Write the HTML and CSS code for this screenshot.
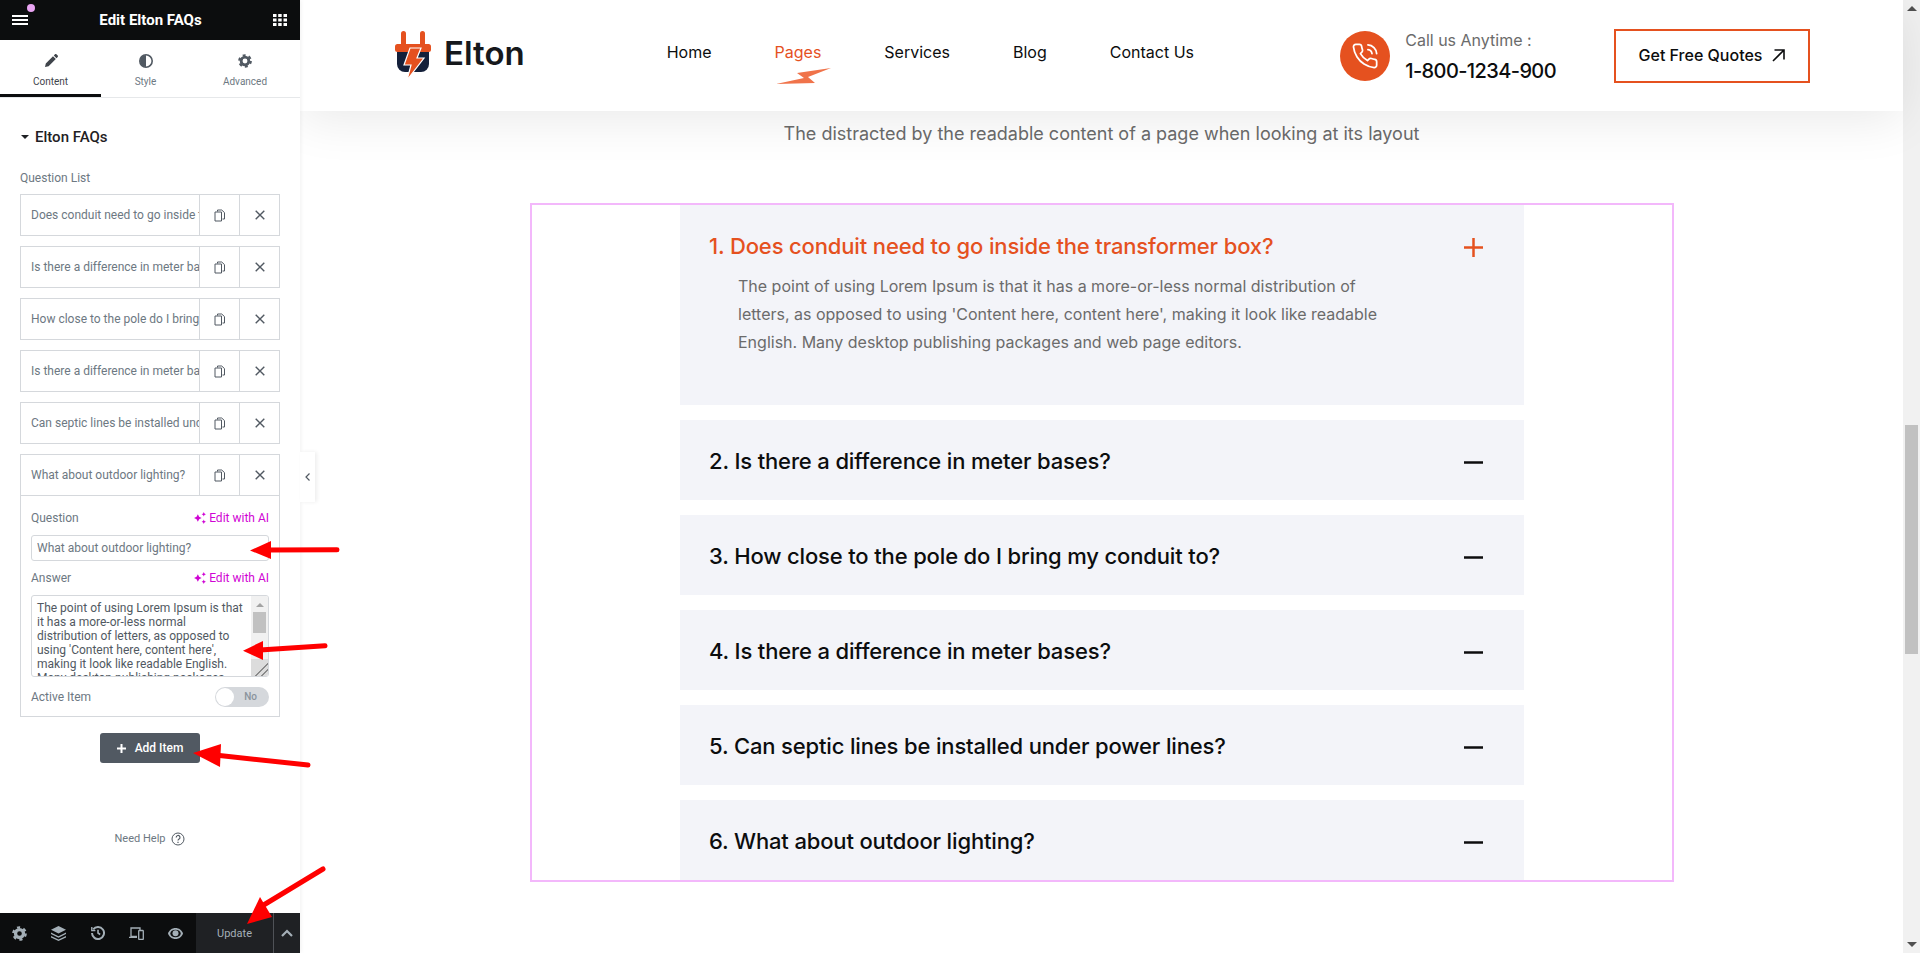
FILE: index.html
```html
<!DOCTYPE html>
<html lang="en">
<head>
  <meta charset="UTF-8">
  <meta name="viewport" content="width=device-width, initial-scale=1.0">
  <title>Edit Elton FAQs</title>
  <link rel="stylesheet" href="styles.css">
</head>
<body>
  <div class="page">

    <!-- Editor panel -->
    <aside class="sidebar">
      <div class="topbar">
        <span class="menu-btn">
          <svg width="16" height="10" viewBox="0 0 16 10"><path d="M0 1h16M0 5h16M0 9h16" stroke="#fff" stroke-width="2"/></svg>
          <i class="menu-dot"></i>
        </span>
        <span class="topbar-title">Edit Elton FAQs</span>
        <svg width="14" height="14" viewBox="0 0 14 14" fill="#fff"><path d="M0 1h3.5v3H0zM5.2 1h3.500v3H5.2zM10.5 1H14v3h-3.500zM0 5.5h3.500v3H0zM5.2 5.5h3.500v3H5.2zM10.5 5.5H14v3h-3.500zM0 10h3.500v3H0zM5.2 10h3.500v3H5.2zM10.5 10H14v3h-3.500z"/></svg>
      </div>

      <div class="tabs">
        <div class="tab active">
          <svg width="14" height="14" viewBox="0 0 14 14" fill="#3f444b"><path d="M1.8 9.400 9 2.200l2.800 2.800-7.200 7.200L1 13zM9.800 1.400 11 .3c.4-.4 1-.4 1.400 0l1.300 1.300c.4.4.4 1 0 1.400l-1.200 1.200z"/></svg>
          <span>Content</span>
        </div>
        <div class="tab">
          <svg width="14" height="14" viewBox="0 0 14 14"><circle cx="7" cy="7" r="6.2" fill="none" stroke="#515962" stroke-width="1.6"/><path d="M7 1a6 6 0 0 0 0 12z" fill="#515962"/></svg>
          <span>Style</span>
        </div>
        <div class="tab">
          <svg width="14" height="14" viewBox="0 0 20 20" fill="none" stroke="#515962"><circle cx="10" cy="10" r="5.5" stroke-width="4"/><circle cx="10" cy="10" r="8.3" stroke-width="3" stroke-dasharray="4.2 4.49"/></svg>
          <span>Advanced</span>
        </div>
      </div>

      <div class="panel">
        <div class="section-title"><i class="caret"></i>Elton FAQs</div>
        <div class="field-label">Question List</div>

        <div class="repeater">
          <div class="row">
            <div class="row-title">Does conduit need to go inside the transformer box?</div>
            <div class="row-btn"><svg class="copy-icon" width="12" height="13" viewBox="0 0 12 13"><path d="M3.5 2.500V1h4.200L10.500 3.600V10H8.500M1 3h6.500v9H1z"/></svg></div>
            <div class="row-btn"><svg class="close-icon" width="10" height="10" viewBox="0 0 10 10"><path d="M.7.7l8.600 8.600M9.300.7.700 9.300"/></svg></div>
          </div>
          <div class="row">
            <div class="row-title">Is there a difference in meter bases?</div>
            <div class="row-btn"><svg class="copy-icon" width="12" height="13" viewBox="0 0 12 13"><path d="M3.5 2.500V1h4.200L10.500 3.600V10H8.500M1 3h6.500v9H1z"/></svg></div>
            <div class="row-btn"><svg class="close-icon" width="10" height="10" viewBox="0 0 10 10"><path d="M.7.7l8.600 8.600M9.300.7.700 9.300"/></svg></div>
          </div>
          <div class="row">
            <div class="row-title">How close to the pole do I bring my conduit to?</div>
            <div class="row-btn"><svg class="copy-icon" width="12" height="13" viewBox="0 0 12 13"><path d="M3.5 2.500V1h4.200L10.500 3.600V10H8.500M1 3h6.500v9H1z"/></svg></div>
            <div class="row-btn"><svg class="close-icon" width="10" height="10" viewBox="0 0 10 10"><path d="M.7.7l8.600 8.600M9.300.7.700 9.300"/></svg></div>
          </div>
          <div class="row">
            <div class="row-title">Is there a difference in meter bases?</div>
            <div class="row-btn"><svg class="copy-icon" width="12" height="13" viewBox="0 0 12 13"><path d="M3.5 2.500V1h4.200L10.500 3.600V10H8.500M1 3h6.500v9H1z"/></svg></div>
            <div class="row-btn"><svg class="close-icon" width="10" height="10" viewBox="0 0 10 10"><path d="M.7.7l8.600 8.600M9.300.7.700 9.300"/></svg></div>
          </div>
          <div class="row">
            <div class="row-title">Can septic lines be installed under power lines?</div>
            <div class="row-btn"><svg class="copy-icon" width="12" height="13" viewBox="0 0 12 13"><path d="M3.5 2.500V1h4.200L10.500 3.600V10H8.500M1 3h6.500v9H1z"/></svg></div>
            <div class="row-btn"><svg class="close-icon" width="10" height="10" viewBox="0 0 10 10"><path d="M.7.7l8.600 8.600M9.300.7.700 9.300"/></svg></div>
          </div>

          <div class="row-open">
            <div class="row row-head">
              <div class="row-title">What about outdoor lighting?</div>
              <div class="row-btn"><svg class="copy-icon" width="12" height="13" viewBox="0 0 12 13"><path d="M3.5 2.500V1h4.200L10.500 3.600V10H8.500M1 3h6.500v9H1z"/></svg></div>
              <div class="row-btn"><svg class="close-icon" width="10" height="10" viewBox="0 0 10 10"><path d="M.7.7l8.600 8.600M9.300.7.700 9.300"/></svg></div>
            </div>
            <div class="row-body">
              <div class="label-line">
                <span>Question</span>
                <span class="ai-link"><svg width="14" height="12" viewBox="0 0 13 11" fill="#d004d4"><path d="M4.5 2 5.700 4.300 8 5.500 5.700 6.700 4.500 9 3.300 6.700 1 5.500 3.300 4.300zM10 0l.6 1.400L12 2l-1.400.6L10 4l-.6-1.400L8 2l1.400-.6zM10 7l.6 1.400 1.400.6-1.400.6L10 11l-.6-1.400L8 9l1.400-.6z"/></svg>Edit with AI</span>
              </div>
              <input class="text-input" type="text" value="What about outdoor lighting?">
              <div class="label-line answer-line">
                <span>Answer</span>
                <span class="ai-link"><svg width="14" height="12" viewBox="0 0 13 11" fill="#d004d4"><path d="M4.5 2 5.700 4.300 8 5.500 5.700 6.700 4.500 9 3.300 6.700 1 5.500 3.300 4.300zM10 0l.6 1.400L12 2l-1.400.6L10 4l-.6-1.400L8 2l1.400-.6zM10 7l.6 1.400 1.400.6-1.400.6L10 11l-.6-1.400L8 9l1.400-.6z"/></svg>Edit with AI</span>
              </div>
              <div class="textarea">
                <div class="textarea-text">The point of using Lorem Ipsum is that it has a more-or-less normal distribution of letters, as opposed to using 'Content here, content here', making it look like readable English. Many desktop publishing packages and web page editors.</div>
                <div class="textarea-bar">
                  <i class="bar-up"></i>
                  <i class="bar-thumb"></i>
                  <i class="bar-grip"></i>
                </div>
              </div>
              <div class="active-line">
                <span>Active Item</span>
                <span class="switch"><i class="knob"></i>No</span>
              </div>
            </div>
          </div>
        </div>

        <div class="add-line">
          <div class="add-btn">
            <svg width="9" height="9" viewBox="0 0 9 9"><path d="M4.5 0v9M0 4.500h9" stroke="#fff" stroke-width="2"/></svg>
            Add Item
          </div>
        </div>

        <div class="help">Need Help
          <svg width="14" height="14" viewBox="0 0 14 14" fill="none" stroke="#515962"><circle cx="7" cy="7" r="6"/><path d="M5.2 5.500a1.900 1.900 0 1 1 2.900 1.500c-.7.5-1.100.8-1.100 1.600" stroke-width="1.2"/><path d="M7 9.800v1.200" stroke-width="1.2"/></svg>
        </div>
      </div>

      <div class="footer">
        <div class="footer-tools">
          <span><svg width="15" height="15" viewBox="0 0 20 20" fill="none" stroke="#a4afb7"><circle cx="10" cy="10" r="5.3" stroke-width="4.4"/><circle cx="10" cy="10" r="8.3" stroke-width="3" stroke-dasharray="4.2 4.49"/></svg></span>
          <span><svg width="15" height="15" viewBox="0 0 15 15" fill="#a4afb7"><path d="M7.5 0 15 3.700 7.500 7.400 0 3.700z"/><path d="M0 6.600 7.500 10.300 15 6.600v1.500L7.500 11.800 0 8.100zM0 10 7.500 13.500 15 10v1.500L7.500 15 0 11.500z"/></svg></span>
          <span><svg width="14" height="14" viewBox="0 0 14 14" fill="none" stroke="#a4afb7" stroke-width="2"><path d="M2.2 3.400A6 6 0 1 1 1 7"/><path d="M7 3.800V7l2.200 1.500" stroke-width="1.6"/><path d="M.8 1v3.600h3.600" stroke-width="1.4"/></svg></span>
          <span><svg width="15" height="13" viewBox="0 0 15 13" fill="none" stroke="#a4afb7" stroke-width="1.3"><path d="M8 9.500H2V1h9v2M0 10.300h8"/><rect x="9.7" y="3.500" width="4.600" height="9" rx=".7"/></svg></span>
          <span><svg width="15" height="11" viewBox="0 0 15 11"><path d="M7.5 0C4 0 1.200 2.200 0 5.500 1.200 8.800 4 11 7.500 11S13.800 8.800 15 5.500C13.800 2.200 11 0 7.500 0z" fill="#a4afb7"/><ellipse cx="7.5" cy="5.500" rx="5.200" ry="3.800" fill="#0c0d0e"/><circle cx="7.5" cy="5.200" r="3" fill="#a4afb7"/></svg></span>
        </div>
        <div class="update-btn">Update</div>
        <div class="update-more">
          <svg width="12" height="8" viewBox="0 0 12 8" fill="none"><path d="M1 7l5-5 5 5" stroke="#a4afb7" stroke-width="2.2"/></svg>
        </div>
      </div>
    </aside>

    <div class="collapse-tab">
      <svg width="5" height="8" viewBox="0 0 5 8" fill="none"><path d="M4.500.5 1 4l3.500 3.500" stroke="#515962" stroke-width="1.2"/></svg>
    </div>

    <!-- Site preview -->
    <main class="main">
      <header class="site-header">
        <div class="logo">
          <svg width="36" height="49" viewBox="0 0 36 49">
            <rect x="6" y="0" width="5" height="15" rx="2.5" fill="#e5511f"/>
            <rect x="25" y="0" width="5" height="15" rx="2.5" fill="#e5511f"/>
            <path d="M2 21h32v12a8 8 0 0 1-8 8H10a8 8 0 0 1-8-8z" fill="#14203a"/>
            <rect x="0" y="13" width="36" height="8" rx="2.5" fill="#e5511f"/>
            <path d="M15 17h11l-4 10h7L12 49l4-15H9z" fill="#e5511f" stroke="#fff" stroke-width="1.2"/>
          </svg>
          <span class="logo-text">Elton</span>
        </div>
        <nav class="nav">
          <a>Home</a>
          <a class="current">Pages
            <svg class="bolt" width="55" height="16" viewBox="0 0 55 16"><path d="M55 0 21 5l7 5L0 16l39-1-7-6z" fill="#f0734a"/></svg>
          </a>
          <a>Services</a>
          <a>Blog</a>
          <a>Contact Us</a>
        </nav>
        <div class="call">
          <span class="call-icon">
            <svg width="28" height="28" viewBox="0 0 24 24" fill="none" stroke="#fff" stroke-width="1.5" stroke-linecap="round" stroke-linejoin="round"><path d="M22 16.920v3a2 2 0 0 1-2.180 2 19.790 19.790 0 0 1-8.630-3.070 19.500 19.500 0 0 1-6-6 19.790 19.790 0 0 1-3.070-8.670A2 2 0 0 1 4.110 2h3a2 2 0 0 1 2 1.720 12.840 12.840 0 0 0 .7 2.810 2 2 0 0 1-.45 2.110L8.090 9.910a16 16 0 0 0 6 6l1.270-1.270a2 2 0 0 1 2.110-.45 12.840 12.840 0 0 0 2.810.7A2 2 0 0 1 22 16.920z"/><path d="M14.500 6.500A4 4 0 0 1 18 10M14.500 2.500A8 8 0 0 1 22 10"/></svg>
          </span>
          <div class="call-text">
            <div class="call-label">Call us Anytime :</div>
            <div class="call-number">1-800-1234-900</div>
          </div>
        </div>
        <a class="quote-btn">Get Free Quotes
          <svg width="13" height="13" viewBox="0 0 13 13" fill="none" stroke="#0c0d0e" stroke-width="1.6"><path d="M1 12 12 1M2.500 1H12v9.500"/></svg>
        </a>
      </header>

      <p class="subtitle">The distracted by the readable content of a page when looking at its layout</p>

      <section class="widget">
        <div class="faq">
          <div class="faq-item open">
            <div class="faq-head">
              <span class="faq-q">1. Does conduit need to go inside the transformer box?</span>
              <svg class="faq-icon" width="19" height="19" viewBox="0 0 19 19"><path d="M9.500 0v19M0 9.500h19" stroke="#e5511f" stroke-width="2.5"/></svg>
            </div>
            <p class="faq-a">The point of using Lorem Ipsum is that it has a more-or-less normal distribution of letters, as opposed to using 'Content here, content here', making it look like readable English. Many desktop publishing packages and web page editors.</p>
          </div>
          <div class="faq-item">
            <div class="faq-head">
              <span class="faq-q">2. Is there a difference in meter bases?</span>
              <svg class="faq-icon" width="19" height="19" viewBox="0 0 19 19"><path d="M0 9.500h19" stroke="#0c0d0e" stroke-width="2.5"/></svg>
            </div>
          </div>
          <div class="faq-item">
            <div class="faq-head">
              <span class="faq-q">3. How close to the pole do I bring my conduit to?</span>
              <svg class="faq-icon" width="19" height="19" viewBox="0 0 19 19"><path d="M0 9.500h19" stroke="#0c0d0e" stroke-width="2.5"/></svg>
            </div>
          </div>
          <div class="faq-item">
            <div class="faq-head">
              <span class="faq-q">4. Is there a difference in meter bases?</span>
              <svg class="faq-icon" width="19" height="19" viewBox="0 0 19 19"><path d="M0 9.500h19" stroke="#0c0d0e" stroke-width="2.5"/></svg>
            </div>
          </div>
          <div class="faq-item">
            <div class="faq-head">
              <span class="faq-q">5. Can septic lines be installed under power lines?</span>
              <svg class="faq-icon" width="19" height="19" viewBox="0 0 19 19"><path d="M0 9.500h19" stroke="#0c0d0e" stroke-width="2.5"/></svg>
            </div>
          </div>
          <div class="faq-item">
            <div class="faq-head">
              <span class="faq-q">6. What about outdoor lighting?</span>
              <svg class="faq-icon" width="19" height="19" viewBox="0 0 19 19"><path d="M0 9.500h19" stroke="#0c0d0e" stroke-width="2.5"/></svg>
            </div>
          </div>
        </div>
      </section>
    </main>

    <div class="page-scroll">
      <i class="scroll-up"></i>
      <i class="scroll-thumb"></i>
      <i class="scroll-down"></i>
    </div>
  </div>

  <!-- Red annotation arrows drawn over the screenshot -->
  <svg class="arrows" width="1920" height="953" viewBox="0 0 1920 953">
    <g fill="#f00" stroke="#f00" stroke-linecap="round">
      <path d="M268 550 337 549.8" stroke-width="5" fill="none"/>
      <path d="M250 550.5 271 541v18z" stroke="none"/>
      <path d="M260 650 325 645.7" stroke-width="5" fill="none"/>
      <path d="M243 650.7 263 641v19z" stroke="none"/>
      <path d="M215 755 308 765" stroke-width="5" fill="none"/>
      <path d="M193 753 221 744 220 767z" stroke="none"/>
      <path d="M262 906 323 869" stroke-width="5" fill="none"/>
      <path d="M247 924 260 897 272 917z" stroke="none"/>
    </g>
  </svg>
</body>
</html>
```

FILE: styles.css
```css
* {
  box-sizing: border-box;
}

html, body {
  margin: 0;
  height: 953px;
  overflow: hidden;
  background-color: #fff;
}

body {
  font-family: Roboto, Arial, sans-serif;
  position: relative;
}

p {
  margin: 0;
}

.page {
  display: flex;
  height: 953px;
}

/* Editor panel */
.sidebar {
  width: 300px;
  flex-shrink: 0;
  display: flex;
  flex-direction: column;
  background-color: #fff;
  box-shadow: 1px 0 4px rgba(0, 0, 0, 0.06);
  position: relative;
  z-index: 2;
}

.topbar {
  height: 40px;
  background-color: #0c0d0e;
  display: flex;
  align-items: center;
  justify-content: space-between;
  padding: 0 13px 0 12px;
}

.menu-btn {
  position: relative;
  display: flex;
}

.menu-dot {
  position: absolute;
  top: -11px;
  right: -7px;
  width: 8px;
  height: 8px;
  border-radius: 50%;
  background-color: #e9a4f2;
}

.topbar-title {
  color: #fff;
  font-size: 15px;
  font-weight: 700;
}

.tabs {
  height: 58px;
  display: grid;
  grid-template-columns: 101px 89px 110px;
  border-bottom: 1px solid #e6e8ea;
}

.tab {
  display: flex;
  flex-direction: column;
  align-items: center;
  padding-top: 14px;
  gap: 7px;
  font-size: 10px;
  line-height: 14px;
  color: #6d7882;
}

.tab.active {
  color: #3f444b;
  border-bottom: 3px solid #0c0d0e;
}

.panel {
  flex: 1;
  padding: 0 20px;
}

.section-title {
  margin-top: 30px;
  font-size: 15px;
  font-weight: 500;
  line-height: 18px;
  color: #1f2124;
  display: flex;
  align-items: center;
}

.caret {
  width: 0;
  height: 0;
  margin: 0 6px 0 1px;
  border-left: 4px solid transparent;
  border-right: 4px solid transparent;
  border-top: 4px solid #1f2124;
}

.field-label {
  margin: 25px 0 9px;
  font-size: 12px;
  line-height: 14px;
  color: #6d7882;
}

.repeater {
  display: flex;
  flex-direction: column;
  gap: 10px;
}

.row {
  height: 42px;
  display: flex;
  border: 1px solid #d5d8dc;
  font-size: 12px;
  color: #6d7882;
}

.row-title {
  width: 178px;
  padding-left: 10px;
  line-height: 40px;
  white-space: nowrap;
  overflow: hidden;
  flex-shrink: 0;
}

.row-btn {
  width: 40px;
  display: flex;
  align-items: center;
  justify-content: center;
  border-left: 1px solid #d5d8dc;
}

.copy-icon {
  fill: none;
  stroke: #515962;
  stroke-width: 1;
}

.close-icon {
  fill: none;
  stroke: #515962;
  stroke-width: 1.4;
}

.row-body {
  height: 221px;
  padding: 15px 10px 0;
  border: 1px solid #d5d8dc;
  border-top: none;
  font-size: 12px;
  line-height: 14px;
  color: #6d7882;
}

.label-line {
  display: flex;
  justify-content: space-between;
}

.answer-line {
  margin-top: 10px;
}

.ai-link {
  display: flex;
  align-items: center;
  gap: 2px;
  color: #d004d4;
}

.text-input {
  display: block;
  width: 100%;
  height: 26px;
  margin-top: 10px;
  padding: 0 5px;
  border: 1px solid #d5d8dc;
  border-radius: 3px;
  font-family: Roboto, Arial, sans-serif;
  font-size: 12px;
  color: #6d7882;
  outline: none;
}

.textarea {
  height: 82px;
  margin-top: 10px;
  display: flex;
  border: 1px solid #d5d8dc;
  border-radius: 3px;
  overflow: hidden;
}

.textarea-text {
  flex: 1;
  padding: 5px 5px 0 5px;
  color: #515962;
}

.textarea-bar {
  width: 17px;
  flex-shrink: 0;
  display: flex;
  flex-direction: column;
  align-items: center;
  background-color: #f1f1f1;
}

.bar-up {
  width: 0;
  height: 0;
  margin-top: 7px;
  border-left: 4px solid transparent;
  border-right: 4px solid transparent;
  border-bottom: 4px solid #a3a3a3;
}

.bar-thumb {
  width: 13px;
  height: 21px;
  margin-top: 5px;
  background-color: #c1c1c1;
}

.bar-grip {
  width: 17px;
  height: 17px;
  margin-top: auto;
  background: linear-gradient(135deg, #dcdcdc 60%, #8a8a8a 60%, #8a8a8a 66%, #dcdcdc 66%, #dcdcdc 78%, #8a8a8a 78%, #8a8a8a 84%, #dcdcdc 84%);
}

.active-line {
  margin-top: 10px;
  display: flex;
  align-items: center;
  justify-content: space-between;
}

.switch {
  width: 54px;
  height: 20px;
  border-radius: 10px;
  background-color: #d5d8dc;
  display: flex;
  align-items: center;
  justify-content: flex-end;
  padding-right: 12px;
  font-size: 10px;
  font-weight: 500;
  color: #8a939c;
  position: relative;
}

.knob {
  position: absolute;
  left: 1px;
  top: 1px;
  width: 18px;
  height: 18px;
  border-radius: 50%;
  background-color: #fff;
}

.add-line {
  margin-top: 16px;
  display: flex;
  justify-content: center;
}

.add-btn {
  width: 100px;
  height: 30px;
  border-radius: 3px;
  background-color: #515962;
  color: #fff;
  font-size: 12px;
  font-weight: 500;
  display: flex;
  align-items: center;
  justify-content: center;
  gap: 9px;
}

.help {
  margin-top: 69px;
  display: flex;
  justify-content: center;
  align-items: center;
  gap: 6px;
  font-size: 11px;
  line-height: 14px;
  color: #6d7882;
}

.footer {
  height: 40px;
  background-color: #0c0d0e;
  display: flex;
}

.footer-tools {
  width: 196px;
  padding-right: 1px;
  display: grid;
  grid-template-columns: repeat(5, 39px);
}

.footer-tools span {
  display: flex;
  align-items: center;
  justify-content: center;
}

.update-btn {
  width: 77px;
  background-color: #1f2124;
  color: #a4afb7;
  font-size: 11px;
  display: flex;
  align-items: center;
  justify-content: center;
}

.update-more {
  flex: 1;
  background-color: #1f2124;
  border-left: 1px solid #4f5257;
  display: flex;
  align-items: center;
  justify-content: center;
}

.collapse-tab {
  position: absolute;
  left: 300px;
  top: 452px;
  z-index: 3;
  width: 15px;
  height: 50px;
  background-color: #fff;
  box-shadow: 2px 0 4px rgba(0, 0, 0, 0.07);
  display: flex;
  align-items: center;
  justify-content: center;
}

/* Site preview */
.main {
  flex: 1;
  min-width: 0;
}

.site-header {
  height: 111px;
  padding: 0 93px 0 95px;
  display: flex;
  align-items: center;
  background-color: #fff;
  box-shadow: 0 8px 50px rgba(0, 0, 0, 0.09);
  font-family: Inter, Arial, sans-serif;
  position: relative;
}

.logo {
  display: flex;
  align-items: center;
  gap: 13px;
}

.logo-text {
  padding-bottom: 5px;
  font-size: 33px;
  font-weight: 600;
  color: #16181c;
}

.nav {
  margin-left: 142px;
  margin-bottom: 7px;
  display: flex;
  gap: 63px;
  font-size: 16px;
  color: #0c0d0e;
}

.nav a {
  position: relative;
}

.nav .current {
  color: #e5511f;
}

.bolt {
  position: absolute;
  left: 1px;
  top: 26px;
}

.call {
  margin-left: auto;
  display: flex;
  align-items: center;
  gap: 15px;
}

.call-icon {
  width: 50px;
  height: 50px;
  border-radius: 50%;
  background-color: #e5511f;
  display: flex;
  align-items: center;
  justify-content: center;
}

.call-label {
  font-size: 16px;
  line-height: 22px;
  color: #6b6b6b;
}

.call-number {
  margin-top: 8px;
  font-size: 20px;
  font-weight: 500;
  line-height: 24px;
  letter-spacing: -0.6px;
  color: #0c0d0e;
}

.quote-btn {
  width: 196px;
  height: 54px;
  margin-left: 58px;
  padding-bottom: 1px;
  border: 2px solid #e5511f;
  display: flex;
  align-items: center;
  justify-content: center;
  gap: 10px;
  font-size: 16px;
  font-weight: 500;
  color: #0c0d0e;
}

.subtitle {
  margin-top: 10px;
  text-align: center;
  font-family: Inter, Arial, sans-serif;
  font-size: 18px;
  line-height: 26px;
  color: #6b6b6b;
}

.widget {
  height: 679px;
  margin: 56px 229px 0 230px;
  border: 2px solid #f3b8fb;
  overflow: hidden;
}

.faq {
  padding: 0 148px;
  display: flex;
  flex-direction: column;
  gap: 15px;
}

.faq-item {
  flex-shrink: 0;
  background-color: #f3f4f9;
  font-family: Inter, Arial, sans-serif;
}

.faq-item.open {
  height: 200px;
}

.faq-head {
  height: 80px;
  padding: 0 41px 0 29px;
  display: flex;
  align-items: center;
  justify-content: space-between;
}

.faq-q {
  padding-top: 2px;
  font-size: 22px;
  font-weight: 500;
  letter-spacing: -0.15px;
  color: #0c0d0e;
}

.faq-icon {
  margin-top: 4px;
}

.open .faq-head {
  height: 53px;
  padding-top: 27px;
}

.open .faq-q {
  color: #e5511f;
}

.faq-a {
  width: 650px;
  margin: 14px 0 0 58px;
  font-size: 16px;
  line-height: 28px;
  color: #6b6b6b;
}

/* Browser scrollbar */
.page-scroll {
  width: 17px;
  flex-shrink: 0;
  display: flex;
  flex-direction: column;
  align-items: center;
  background-color: #f1f1f1;
}

.scroll-up {
  width: 0;
  height: 0;
  margin-top: 6px;
  border-left: 5px solid transparent;
  border-right: 5px solid transparent;
  border-bottom: 5px solid #505050;
}

.scroll-thumb {
  width: 13px;
  height: 229px;
  margin-top: 414px;
  background-color: #c1c1c1;
}

.scroll-down {
  width: 0;
  height: 0;
  margin-top: auto;
  margin-bottom: 6px;
  border-left: 5px solid transparent;
  border-right: 5px solid transparent;
  border-top: 5px solid #505050;
}

.arrows {
  position: absolute;
  left: 0;
  top: 0;
  z-index: 5;
  pointer-events: none;
}
```
